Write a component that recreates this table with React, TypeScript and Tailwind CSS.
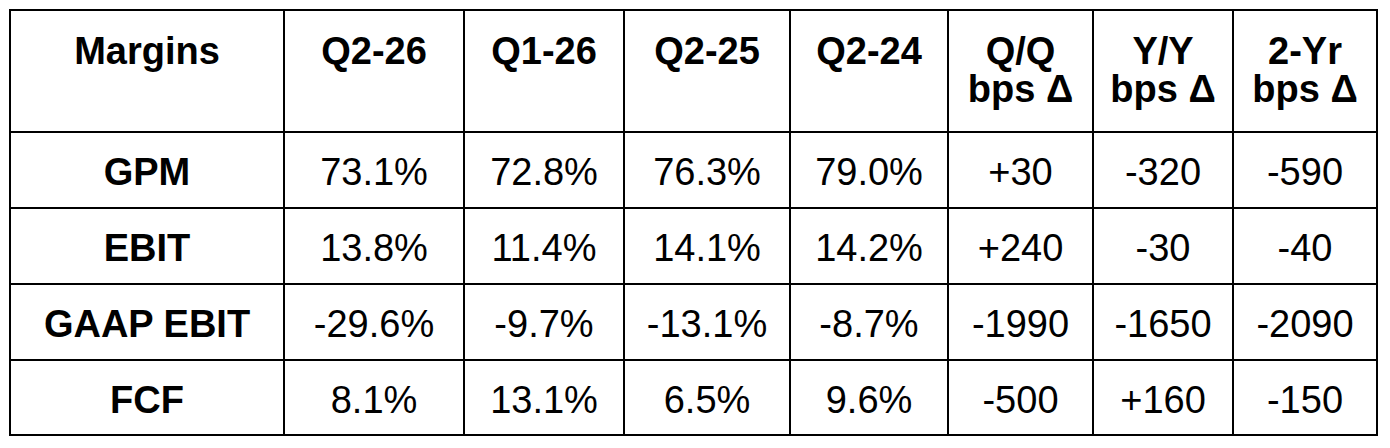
import React from "react";

const headers = ["Margins", "Q2-26", "Q1-26", "Q2-25", "Q2-24", "Q/Q bps Δ", "Y/Y bps Δ", "2-Yr bps Δ"];

const rows = [
  ["GPM", "73.1%", "72.8%", "76.3%", "79.0%", "+30", "-320", "-590"],
  ["EBIT", "13.8%", "11.4%", "14.1%", "14.2%", "+240", "-30", "-40"],
  ["GAAP EBIT", "-29.6%", "-9.7%", "-13.1%", "-8.7%", "-1990", "-1650", "-2090"],
  ["FCF", "8.1%", "13.1%", "6.5%", "9.6%", "-500", "+160", "-150"],
];

const MarginsTable = () => {
  return (
    <div
      className="grid bg-black p-[2px] gap-[2px] w-fit grid-cols-[272px_178px_158px_164px_156px_143px_138px_142px] grid-rows-[120px_74px_74px_74px_73px] text-black text-[38px] leading-[38px]"
      style={{ fontFamily: '"Liberation Sans", Arial, sans-serif' }}
    >
      {headers.map((h) => (
        <div key={h} className="bg-white text-center font-bold pt-[21px] px-1">
          {h.includes("bps") ? (
            <>
              {h.replace(" bps Δ", "")}
              <br />
              bps Δ
            </>
          ) : (
            h
          )}
        </div>
      ))}
      {rows.map((row) =>
        row.map((cell, i) => (
          <div
            key={row[0] + i}
            className={`bg-white text-center pt-[20px] whitespace-nowrap ${i === 0 ? "font-bold" : ""}`}
          >
            {cell}
          </div>
        ))
      )}
    </div>
  );
};

export default function App() {
  return (
    <div className="w-[1390px] h-[448px] bg-white pl-[9px] pt-[9px]">
      <MarginsTable />
    </div>
  );
}
